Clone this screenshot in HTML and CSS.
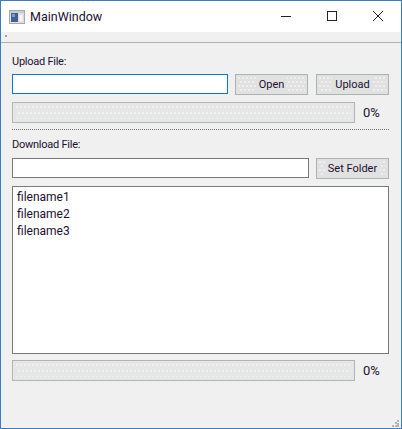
FILE: index.html
```html
<!DOCTYPE html>
<html lang="en">
<head>
<meta charset="utf-8">
<title>MainWindow</title>
<link rel="stylesheet" href="styles.css">
</head>
<body>
<div class="window">
  <header class="titlebar">
    <svg class="app-icon" width="16" height="16" viewBox="0 0 16 16">
      <rect x="0.5" y="1.5" width="15" height="13" fill="#e4e4e4" stroke="#a8a8a8"/>
      <rect x="1" y="2" width="14" height="2" fill="#c8ccd4"/>
      <rect x="2" y="4" width="7" height="9" fill="#3f5f96"/>
      <rect x="3" y="5" width="3" height="3" fill="#7f9cc8"/>
      <rect x="10" y="5" width="4" height="8" fill="#f6f6f6" stroke="#c4c4c4" stroke-width="0.5"/>
    </svg>
    <span class="title">MainWindow</span>
    <div class="controls">
      <svg class="ctl" width="46" height="30" viewBox="0 0 46 30"><path d="M18 14.5h10" stroke="#2a1a3a" fill="none"/></svg>
      <svg class="ctl" width="46" height="30" viewBox="0 0 46 30"><rect x="18.5" y="9.5" width="9" height="9" stroke="#2a1a3a" fill="none"/></svg>
      <svg class="ctl" width="46" height="30" viewBox="0 0 46 30"><path d="M18 9l10 10M28 9l-10 10" stroke="#2a1a3a" fill="none"/></svg>
    </div>
  </header>
  <div class="menubar"><span class="menu-dot"></span></div>
  <main class="content">
    <div class="label upload-label">Upload File:</div>
    <div class="row">
      <div class="input focus"></div>
      <div class="button"><span>Open</span></div>
      <div class="button"><span>Upload</span></div>
    </div>
    <div class="row progress-row">
      <div class="progress"></div>
      <span class="percent">0%</span>
    </div>
    <div class="separator"></div>
    <div class="label download-label">Download File:</div>
    <div class="row">
      <div class="input"></div>
      <div class="button"><span>Set Folder</span></div>
    </div>
    <ul class="list">
      <li>filename1</li>
      <li>filename2</li>
      <li>filename3</li>
    </ul>
    <div class="row progress-row lower">
      <div class="progress"></div>
      <span class="percent">0%</span>
    </div>
  </main>
  <svg class="grip" width="8" height="8" viewBox="0 0 8 8">
    <path d="M5 0h2v2h-2zM3 2h2v2h-2zM5 3h2v2h-2zM0 5h2v2h-2zM3 5h2v2h-2zM5 5h2v2h-2z" fill="#b4b4b4"/>
  </svg>
</div>
</body>
</html>
```

FILE: styles.css
```css
* { box-sizing: border-box; }
html, body { margin: 0; padding: 0; }
body {
  width: 402px;
  height: 429px;
  overflow: hidden;
  font-family: "Roboto", "Open Sans", sans-serif;
  font-size: 11px;
  color: #1c1030;
}
.window {
  position: relative;
  width: 402px;
  height: 429px;
  border: 1px solid #3a7dc2;
  background: #f0f0f0;
  display: flex;
  flex-direction: column;
}
.titlebar {
  height: 31px;
  background: #fff;
  display: flex;
  align-items: center;
  padding-left: 8px;
  flex: none;
}
.app-icon { margin-right: 5px; }
.title { font-size: 12.5px; }
.controls { margin-left: auto; display: flex; align-items: center; }
.ctl { display: block; }
.menubar {
  height: 11px;
  flex: none;
  background: #f0f0f0;
  border-bottom: 1px solid #aab2b2;
  position: relative;
}
.menu-dot {
  position: absolute;
  left: 4px;
  top: 3px;
  width: 2px;
  height: 2px;
  background: #a0a0a0;
}
.content {
  padding: 0 12px 0 11px;
  display: flex;
  flex-direction: column;
}
.label { height: 16px; line-height: 16px; letter-spacing: -0.25px; }
.upload-label { margin-top: 11px; margin-bottom: 4px; }
.download-label { margin-top: 7px; margin-bottom: 5px; }
.row { display: flex; align-items: flex-start; gap: 7px; }
.input {
  flex: 1;
  height: 20px;
  background: #fff;
  border: 1px solid #7a7a7a;
}
.input.focus { border-color: #0078d7; }
.button {
  flex: none;
  width: 73px;
  height: 21px;
  padding: 2px;
  border: 1px solid #adb3b3;
  background-image:
    radial-gradient(circle at 1px 1px, #f0f0f0 0.7px, transparent 0.8px),
    radial-gradient(circle at 3px 5px, #f0f0f0 0.7px, transparent 0.8px),
    linear-gradient(#e1e1e1, #e1e1e1);
  background-size: 4px 8px, 4px 8px, auto;
  background-clip: content-box, content-box, border-box;
  background-origin: content-box, content-box, border-box;
  display: flex;
  align-items: center;
  justify-content: center;
}
.button span {
  background: #e1e1e1;
  padding: 1px 3px;
  line-height: 13px;
}
.button + .button { margin-left: 1px; }
.progress-row { margin-top: 7px; align-items: center; gap: 8px; }
.progress-row.lower { margin-top: 6px; }
.progress {
  flex: none;
  width: 343px;
  height: 21px;
  padding: 3px;
  border: 1px solid #b0b6b6;
  background-image:
    radial-gradient(circle at 1px 1px, #f1f1f1 0.7px, transparent 0.8px),
    radial-gradient(circle at 3px 7px, #f1f1f1 0.7px, transparent 0.8px),
    linear-gradient(#e6e6e6, #e6e6e6);
  background-size: 4px 12px, 4px 12px, auto;
  background-clip: content-box, content-box, border-box;
  background-origin: content-box, content-box, border-box;
}
.percent { font-size: 13px; }
.separator {
  margin-top: 6px;
  height: 1px;
  border-top: 1px dotted #707070;
}
.list {
  list-style: none;
  margin: 7px 0 0;
  padding: 2px 4px;
  height: 168px;
  background: #fff;
  border: 1px solid #7a7a7a;
  font-size: 12px;
}
.list li { height: 17px; line-height: 17px; }
.grip { position: absolute; right: 1px; bottom: 0; }
```
